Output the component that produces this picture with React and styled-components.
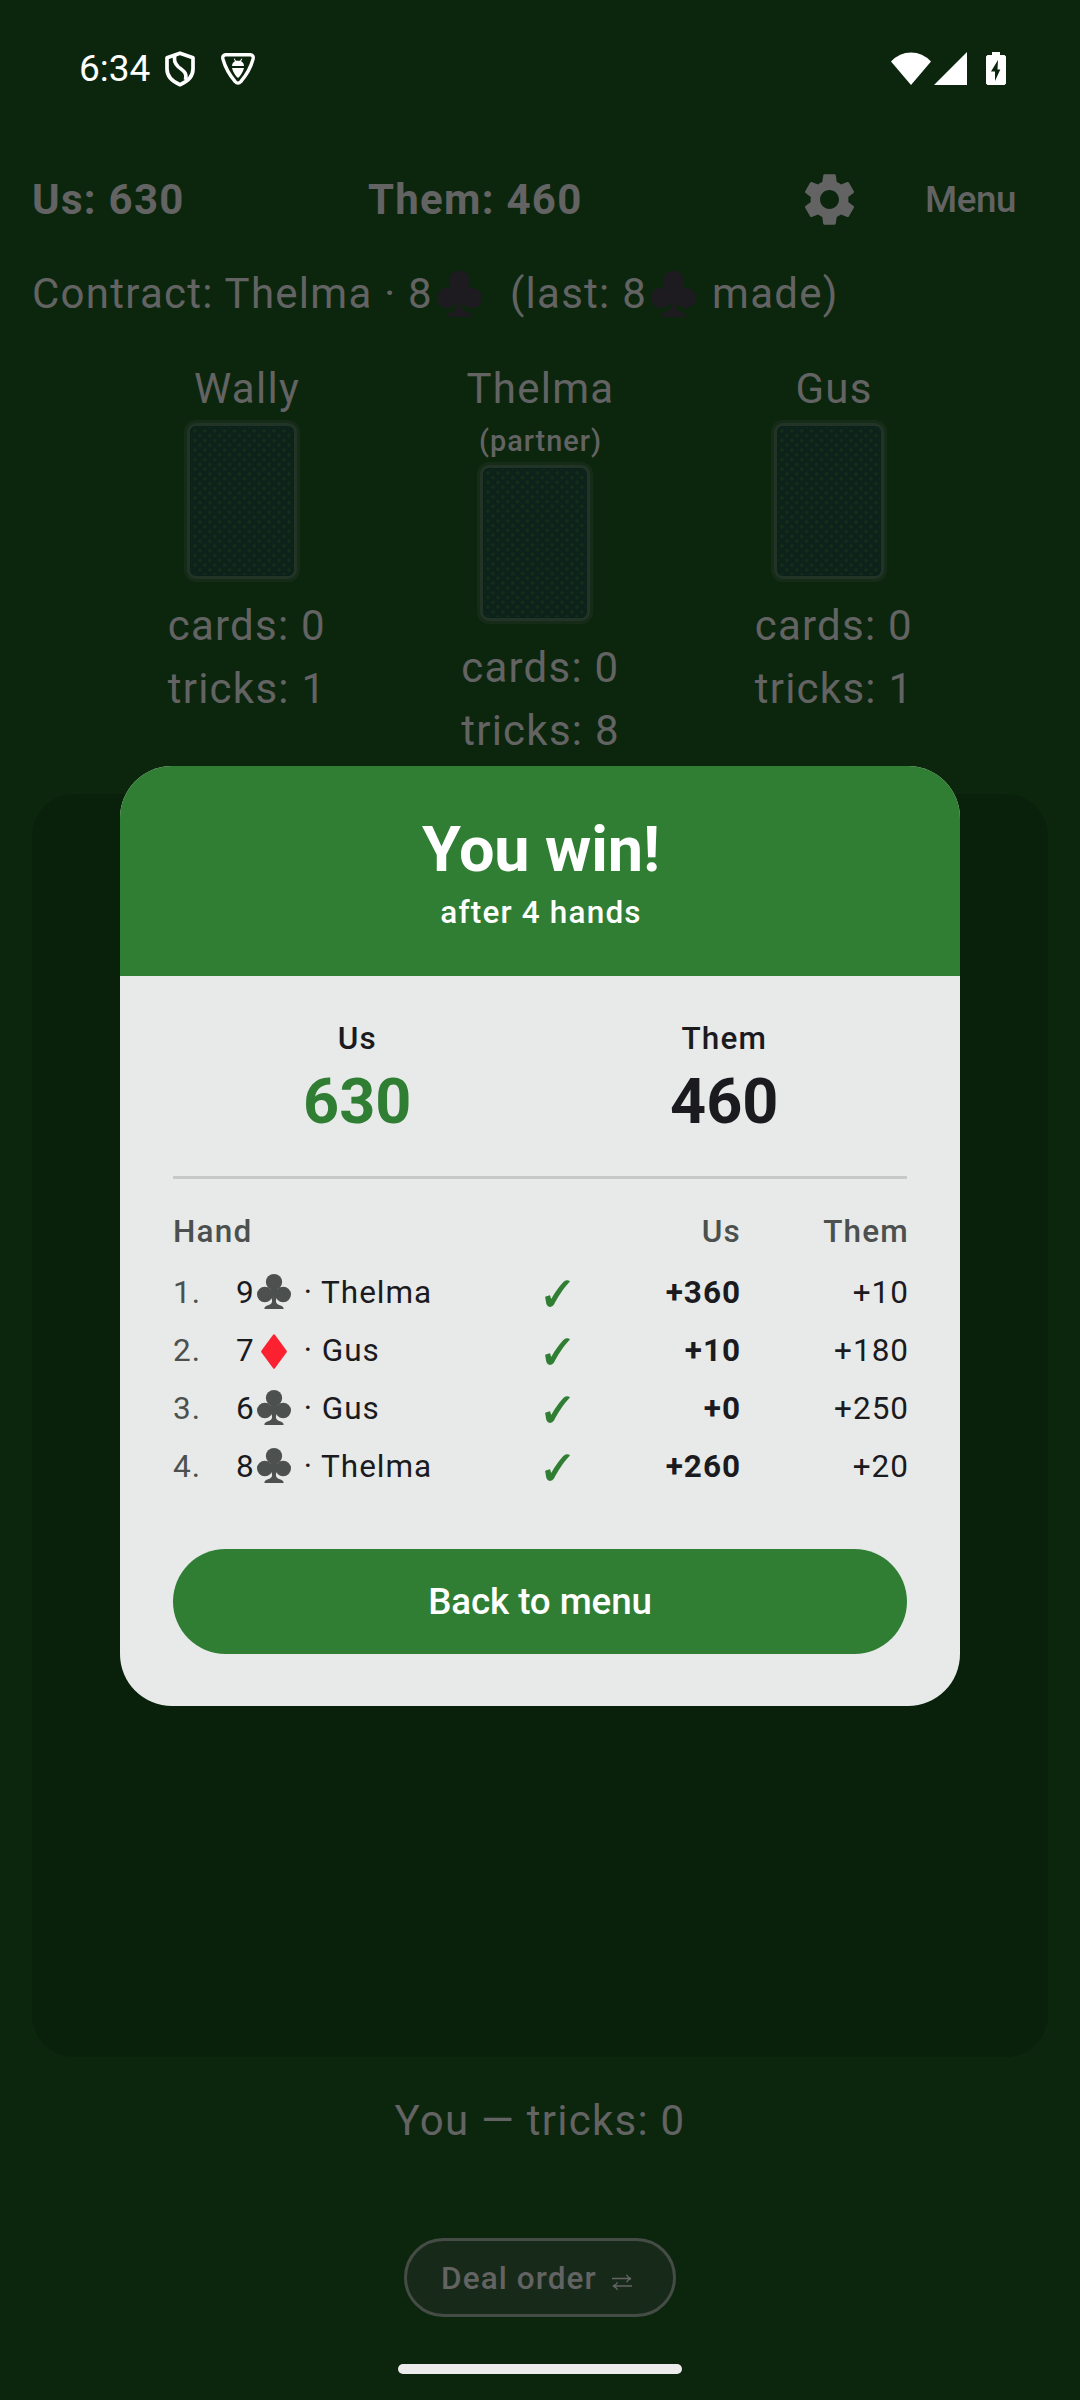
import React from "react";
import styled, { createGlobalStyle } from "styled-components";
import { MdSettings } from "react-icons/md";

const GlobalStyle = createGlobalStyle`
  * { box-sizing: border-box; }
  body { margin: 0; background: #0c260e; }
`;

const dim = "#636363";
const green = "#2f7e33";
const ink = "#1b1b1f";
const muted = "#4c504e";

const Screen = styled.div`
  position: relative;
  width: 1080px;
  height: 2400px;
  overflow: hidden;
  display: flex;
  flex-direction: column;
  background: #0c260e;
  color: ${dim};
  font-family: Roboto, "Liberation Sans", sans-serif;
  font-size: 42px;
  line-height: 63px;
  letter-spacing: 1.26px;
  white-space: nowrap;
`;

const StatusBar = styled.header`
  flex: none;
  display: flex;
  align-items: center;
  justify-content: space-between;
  height: 136px;
  padding: 0 74px 0 79px;
  color: #fff;
`;

const Clock = styled.span`
  font-size: 37px;
  letter-spacing: 0;
  margin-right: 15px;
`;

const StatusGroup = styled.div`
  display: flex;
  align-items: center;
`;

const ScoreBar = styled.div`
  flex: none;
  display: grid;
  grid-template-columns: 336px 417px 1fr 90px;
  align-items: center;
  height: 126px;
  padding: 0 65px 0 32px;
  font-weight: 700;
`;

const SettingsButton = styled.button`
  display: flex;
  width: 88px;
  padding: 0;
  justify-content: center;
  border: 0;
  background: none;
  color: inherit;
`;

const MenuButton = styled.button`
  border: 0;
  padding: 2px 0 0;
  background: none;
  color: inherit;
  font: 500 36.75px/52px Roboto, sans-serif;
  letter-spacing: -0.4px;
  text-align: right;
`;

const Contract = styled.div`
  flex: none;
  display: flex;
  height: 63px;
  padding-left: 32px;
`;

const Glyph = styled.svg`
  flex: none;
  display: block;
  width: ${(p) => p.$w}px;
  height: ${(p) => p.$h}px;
  margin: ${(p) => p.$m || "0"};
  fill: ${(p) => p.$fill || "currentColor"};
`;

const Players = styled.div`
  flex: none;
  display: flex;
  justify-content: center;
  gap: 135.5px;
  height: 469px;
  padding: 32px 0 0 1px;
`;

const Player = styled.div`
  display: flex;
  flex-direction: column;
  align-items: center;
  width: 158px;
`;

const Role = styled.span`
  font-size: 28.875px;
  line-height: 42px;
  font-weight: 500;
  letter-spacing: 1px;
`;

const CardBack = styled.div`
  width: 116px;
  height: 162px;
  margin: 0 11px 12px 0;
  padding: 3px;
  border-radius: 12px;
  background: #172b19;
`;

const CardFace = styled.div`
  height: 100%;
  border: 3px solid #213426;
  border-radius: 9px;
  background-color: #0c221a;
  background-image:
    radial-gradient(circle, #142e19 0 1.4px, transparent 2.1px),
    radial-gradient(circle, #142e19 0 1.4px, transparent 2.1px);
  background-size: 9.9px 9.6px;
  background-position: 0 0, 4.95px 4.8px;
  box-shadow: inset 0 0 0 1px #0b211b;
`;

const Stats = styled.div`
  display: flex;
  flex-direction: column;
  align-items: flex-start;
`;

const Table = styled.div`
  flex: none;
  height: 1263px;
  margin: 0 32px;
  border-radius: 42px;
  background: #09200b;
`;

const Footer = styled.footer`
  flex: 1;
  display: flex;
  flex-direction: column;
  align-items: center;
  padding-top: 32px;
`;

const DealOrder = styled.button`
  display: flex;
  align-items: center;
  gap: 15px;
  width: 272px;
  height: 79px;
  margin: 86px 0 47px;
  padding: 2px 0 0 34px;
  border: 3px solid #454c46;
  border-radius: 40px;
  background: #172a19;
  color: ${dim};
  font: 500 31.5px/42px Roboto, sans-serif;
  letter-spacing: 1.1px;
`;

const HomeBar = styled.div`
  width: 284px;
  height: 10px;
  border-radius: 5px;
  background: #ebeceb;
`;

const Overlay = styled.div`
  position: absolute;
  inset: 0;
  padding-top: 766px;
`;

const Dialog = styled.section`
  width: 840px;
  height: 940px;
  margin: 0 auto;
  border-radius: 52px;
  overflow: hidden;
  background: #e7eae8;
  color: ${ink};
  font-size: 31.5px;
  line-height: 42px;
  letter-spacing: 1.18px;
`;

const DialogHeader = styled.div`
  height: 210px;
  padding: 42px 0 0 2px;
  background: ${green};
  color: #fff;
  text-align: center;
  font-weight: 500;
`;

const Title = styled.h1`
  margin: 0;
  font-size: 63px;
  line-height: 84px;
  font-weight: 700;
  letter-spacing: -0.1px;
`;

const DialogBody = styled.div`
  display: flex;
  flex-direction: column;
  padding: 42px 53px 0;
`;

const Totals = styled.div`
  display: grid;
  grid-template-columns: 1fr 1fr;
  height: 161px;
  border-bottom: 3px solid #c6c9c7;
`;

const Total = styled.div`
  display: flex;
  flex-direction: column;
  align-items: center;
  padding-left: 1.5px;
  font-weight: 500;
`;

const TotalValue = styled.strong`
  font-size: 63px;
  line-height: 84px;
  font-weight: 700;
  letter-spacing: 0;
  color: ${(p) => (p.$win ? green : ink)};
`;

const HandRow = styled.div`
  display: grid;
  grid-template-columns: 63px 307px 28px 168px 168px;
  align-items: center;
  height: 58px;
  letter-spacing: 0.98px;
`;

const HandHeader = styled(HandRow)`
  height: 42px;
  margin: 32px 0 11px;
  color: ${muted};
  font-weight: 500;
  letter-spacing: 1.2px;
`;

const Index = styled.span`
  color: ${muted};
`;

const Bid = styled.span`
  display: flex;
  align-items: center;
`;

const Points = styled.span`
  text-align: right;
  margin-right: -2px;
  font-weight: ${(p) => p.$weight || 400};
`;

const Primary = styled.button`
  height: 105px;
  margin-top: 53px;
  border: 0;
  border-radius: 53px;
  background: ${green};
  color: #fff;
  font: 500 36.75px/52px Roboto, sans-serif;
  letter-spacing: -0.1px;
`;

function Club({ w, h, m, fill }) {
  return (
    <Glyph viewBox="0 0 100 104" preserveAspectRatio="none" $w={w} $h={h} $m={m} $fill={fill}>
      <circle cx="50" cy="24" r="24" />
      <circle cx="23" cy="61" r="23" />
      <circle cx="77" cy="61" r="23" />
      <path d="M38 40H62L57 56L64 66Q54 72 56 83C57 93 78 93 78 101V104H22V101C22 93 43 93 44 83Q46 72 36 66L43 56Z" />
    </Glyph>
  );
}

function Diamond() {
  return (
    <Glyph viewBox="0 0 26 35" $w={26} $h={35} $m="0 5px 0 6px" $fill="#fb2130">
      <path d="M12.1.7Q13-.4 13.9.7L25.5 16.5Q26.1 17.5 25.5 18.5L13.9 34.2Q13 35.4 12.1 34.2L.5 18.5Q-.1 17.5.5 16.5Z" />
    </Glyph>
  );
}

function Check() {
  return (
    <Glyph viewBox="0 0 25 27" $w={25} $h={27} $m="1px 0 0 2px" $fill={green}>
      <path d="M.2 17.2Q.1 16.600.8 16.400L4 15.400Q5.200 15.200 5.500 16.500L5.900 18.300Q6.200 19 6.700 18.200C10.500 12 15 5 19.600 1.100Q21 .1 22.200.3L24.500.8Q25 1.200 24.600 2L24 2.500C18.200 8.500 12.700 17.500 9 24.500Q7.500 26.900 5 26.900Q2.600 26.900 1.600 24.500C1 22.500.600 19.800.200 17.200Z" />
    </Glyph>
  );
}

function ShieldIcon() {
  return (
    <Glyph viewBox="0 0 30 36" $w={30} $h={36} $m="2px 0 0">
      <path
        d="M15 2.200L28 6.700V18C28 25.500 22 30.800 15 33.700C8 30.800 2 25.500 2 18V6.700Z"
        fill="none"
        stroke="currentColor"
        strokeWidth="3.700"
        strokeLinejoin="round"
      />
      <path
        d="M10 4C8.500 9 9.500 12 13 15.500C17.500 19.500 22.500 21 20.500 29"
        fill="none"
        stroke="currentColor"
        strokeWidth="3.600"
      />
    </Glyph>
  );
}

function BugIcon() {
  return (
    <Glyph viewBox="0 0 34 32" $w={34} $h={32} $m="2px 0 0">
      <path
        d="M4.500 1.800H29.500Q33 2.200 32 6.200C30 13.500 25 22.500 19.800 28.600Q17 31.600 14.200 28.600C9 22.500 4 13.500 2 6.200Q1 2.200 4.500 1.800Z"
        fill="none"
        stroke="currentColor"
        strokeWidth="3.400"
      />
      <path d="M11 13C11 10 13 8.500 14 8.200L12.700 5.800L13.500 5.500L15 7.800H19L20.500 5.500L21.300 5.800L20 8.200C21 8.500 23 10 23 13ZM11 15H23C22 19 19.500 23 17 25C14.500 23 12 19 11 15Z" />
    </Glyph>
  );
}

function WifiIcon() {
  return (
    <Glyph viewBox="0 0 40 33" $w={40} $h={33}>
      <path d="M0 9.500Q8.500.5 20 .5T40 9.500L20 33Z" />
    </Glyph>
  );
}

function SignalIcon() {
  return (
    <Glyph viewBox="0 0 33 33" $w={33} $h={33} $m="0 0 0 3px">
      <path d="M33 0V33H0Z" />
    </Glyph>
  );
}

function BatteryIcon() {
  return (
    <Glyph viewBox="0 0 20 33" $w={20} $h={33} $m="0 0 0 19px">
      <path
        fillRule="evenodd"
        d="M6 0H14V3H18.500L20 4.500V31.500L18.500 33H1.500L0 31.500V4.500L1.500 3H6ZM12 8L5 19.500H9V29L14.300 17.500H11.500Z"
      />
    </Glyph>
  );
}

function SwapIcon() {
  return (
    <Glyph viewBox="0 0 20 16" $w={20} $h={16} $m="7px 0 0">
      <path
        d="M0 4.500H18.500M14.500.800Q16 3.800 19 4.500Q16 5.200 14.500 8.200M20 12H1.500M5.500 8.200Q4 11.200 1 12Q4 12.700 5.500 15.700"
        fill="none"
        stroke="currentColor"
        strokeWidth="1.300"
      />
    </Glyph>
  );
}

const players = [
  { name: "Wally", tricks: 1 },
  { name: "Thelma", role: "(partner)", tricks: 8 },
  { name: "Gus", tricks: 1 },
];

const hands = [
  { level: 9, suit: "club", who: "Thelma", us: "+360", them: "+10" },
  { level: 7, suit: "diamond", who: "Gus", us: "+10", them: "+180" },
  { level: 6, suit: "club", who: "Gus", us: "+0", them: "+250" },
  { level: 8, suit: "club", who: "Thelma", us: "+260", them: "+20" },
];

export default function App() {
  return (
    <>
      <GlobalStyle />
      <Screen>
        <StatusBar>
          <StatusGroup>
            <Clock>6:34</Clock>
            <ShieldIcon />
            <Glyph as="span" $w={26} $h={1} />
            <BugIcon />
          </StatusGroup>
          <StatusGroup>
            <WifiIcon />
            <SignalIcon />
            <BatteryIcon />
          </StatusGroup>
        </StatusBar>

        <ScoreBar>
          <span>Us: 630</span>
          <span>Them: 460</span>
          <SettingsButton aria-label="Settings">
            <MdSettings size={63} />
          </SettingsButton>
          <MenuButton>Menu</MenuButton>
        </ScoreBar>

        <Contract>
          <span>Contract: Thelma · 8</span>
          <Club w={45} h={46} m="9px 28px 0 4px" fill="#1d1b20" />
          <span>(last: 8</span>
          <Club w={45} h={46} m="9px 16px 0 4px" fill="#1d1b20" />
          <span>made)</span>
        </Contract>

        <Players>
          {players.map((p) => (
            <Player key={p.name}>
              <span>{p.name}</span>
              {p.role && <Role>{p.role}</Role>}
              <CardBack>
                <CardFace />
              </CardBack>
              <Stats>
                <span>cards: 0</span>
                <span>tricks: {p.tricks}</span>
              </Stats>
            </Player>
          ))}
        </Players>

        <Table />

        <Footer>
          <span>You — tricks: 0</span>
          <DealOrder>
            Deal order
            <SwapIcon />
          </DealOrder>
          <HomeBar />
        </Footer>

        <Overlay>
          <Dialog role="dialog">
            <DialogHeader>
              <Title>You win!</Title>
              after 4 hands
            </DialogHeader>
            <DialogBody>
              <Totals>
                <Total>
                  Us
                  <TotalValue $win>630</TotalValue>
                </Total>
                <Total>
                  Them
                  <TotalValue>460</TotalValue>
                </Total>
              </Totals>
              <HandHeader>
                <span>Hand</span>
                <span />
                <span />
                <Points $weight={500}>Us</Points>
                <Points $weight={500}>Them</Points>
              </HandHeader>
              {hands.map((h, i) => (
                <HandRow key={i}>
                  <Index>{i + 1}.</Index>
                  <Bid>
                    {h.level}
                    {h.suit === "club" ? <Club w={34} h={35} m="0 1px 3px 2px" fill={muted} /> : <Diamond />}
                    <Glyph as="span" $w={12} $h={1} />· {h.who}
                  </Bid>
                  <Check />
                  <Points $weight={700}>{h.us}</Points>
                  <Points>{h.them}</Points>
                </HandRow>
              ))}
              <Primary>Back to menu</Primary>
            </DialogBody>
          </Dialog>
        </Overlay>
      </Screen>
    </>
  );
}
